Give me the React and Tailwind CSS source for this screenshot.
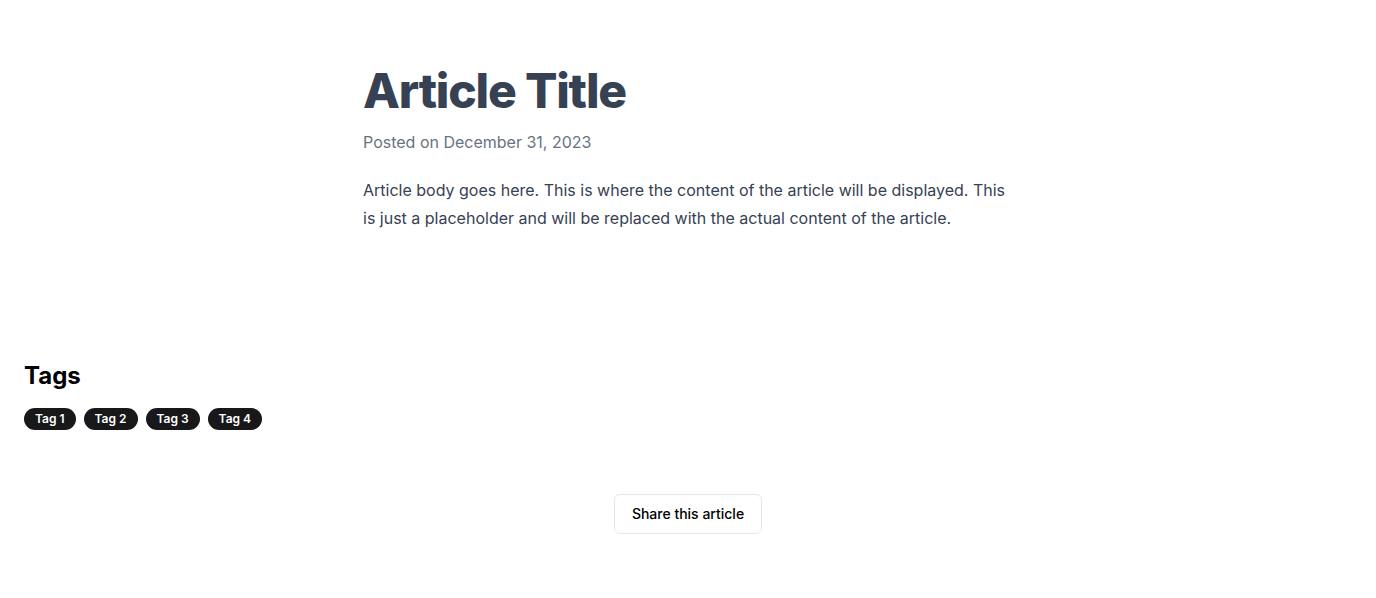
import React from "react";

const tags = ["Tag 1", "Tag 2", "Tag 3", "Tag 4"];

export default function App() {
  return (
    <div className="min-h-screen bg-white font-['Inter',sans-serif]">
      {/* ARTICLE */}
      <article className="max-w-[650px] mx-auto pt-[61px]">
        <h1 className="text-5xl leading-tight font-extrabold tracking-tight text-gray-700">
          Article Title
        </h1>
        <p className="mt-[9px] text-base text-gray-500">Posted on December 31, 2023</p>
        <p className="mt-[22px] text-base leading-7 text-gray-700">
          Article body goes here. This is where the content of the article will be displayed. This
          is just a placeholder and will be replaced with the actual content of the article.
        </p>
      </article>

      {/* TAGS */}
      <section className="px-6 mt-32">
        <h2 className="text-2xl font-bold text-black">Tags</h2>
        <div className="mt-4 flex gap-2">
          {tags.map((t) => (
            <span
              key={t}
              className="inline-flex items-center rounded-full border border-transparent bg-zinc-900 px-2.5 py-0.5 text-xs font-semibold text-white"
            >
              {t}
            </span>
          ))}
        </div>
      </section>

      {/* SHARE */}
      <div className="mt-16 flex justify-center">
        <button className="h-10 px-[17px] py-2 rounded-md border border-gray-200 bg-white text-sm font-medium text-black">
          Share this article
        </button>
      </div>
    </div>
  );
}
